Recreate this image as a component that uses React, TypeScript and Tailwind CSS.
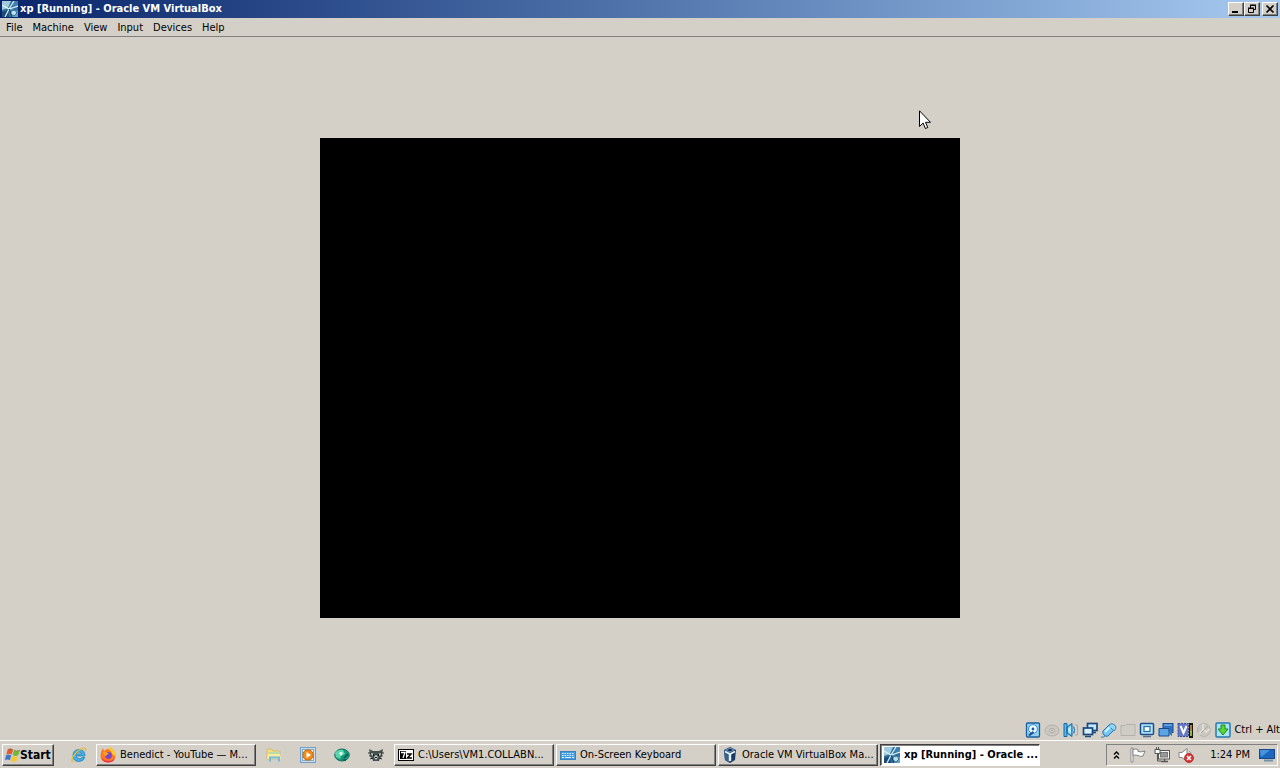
import type { ReactNode } from 'react';

type IconProps = { className?: string };

function Svg({ children, className = '', box = '0 0 16 16' }: { children: ReactNode; className?: string; box?: string }) {
  return (
    <svg viewBox={box} className={`size-4 shrink-0 ${className}`} aria-hidden="true">
      {children}
    </svg>
  );
}

const GuestIcon = ({ className }: IconProps) => (
  <Svg className={className}>
    <rect width="16" height="16" fill="#2f6f9c" />
    <path d="M0 0h9L6 7 0 9z" fill="#9fcbdd" />
    <path d="M10 0h6v6l-6-1z" fill="#3d7fae" />
    <path d="M0 11l6-2 1 7H0z" fill="#1d4b78" />
    <path d="M9 8l7 2v6h-6z" fill="#5ea3c6" />
    <path d="M0 4l7 4 9-3M12 0L7 8l-4 8" fill="none" stroke="#d8f0f8" strokeWidth="1.2" />
    <path d="M7 8l3 8" stroke="#163f66" />
    <path d="M9 10l4-1 2 3-3 3-3-2z" fill="#b4dfee" stroke="#194468" strokeWidth=".7" />
  </Svg>
);

const DiskIcon = () => (
  <Svg>
    <rect x="1.5" y="1" width="13" height="14" rx="1" fill="#8fd0f4" stroke="#1d5d9e" strokeWidth="1.3" />
    <circle cx="8" cy="7" r="4.4" fill="#eefaff" stroke="#3b8cc8" />
    <circle cx="8" cy="7" r="1.4" fill="#1d5d9e" />
    <path d="M3 13l5-4 1 2-4 3z" fill="#1d4f8c" />
  </Svg>
);
const DiscIcon = () => (
  <Svg>
    <ellipse cx="8" cy="8.500" rx="7" ry="5.500" fill="#cbc8c1" stroke="#b2afa8" />
    <ellipse cx="8" cy="8.500" rx="2.600" ry="2" fill="#dedbd4" stroke="#aaa79f" />
    <circle cx="8" cy="8.500" r=".8" fill="#99968f" />
  </Svg>
);
const AudioIcon = () => (
  <Svg>
    <path d="M1 1.500h3v13H1zM4 5l5-3.500v13L4 11z" fill="#55b8ee" stroke="#1967a5" />
    <path d="M5 6l3-2v8l-3-2z" fill="#b5ecff" />
    <path d="M10.500 4.500q2 3.500 0 7" fill="none" stroke="#338ac4" strokeWidth="1.300" />
    <path d="M12 3h2.500v10H12" fill="none" stroke="#aaa9a4" />
  </Svg>
);
const NetworkIcon = () => (
  <Svg>
    <rect x="5.500" y="1.500" width="9.500" height="7" fill="#c3e8fa" stroke="#1b477d" strokeWidth="1.700" />
    <rect x="1.500" y="6" width="9" height="6.500" fill="#d5effb" stroke="#1b477d" strokeWidth="1.700" />
    <path d="M3 14.500h6M11 10.500h3" stroke="#1b477d" strokeWidth="1.300" />
  </Svg>
);
const UsbIcon = () => (
  <Svg>
    <path d="M2 9l6-6q2-1 4 1t1 4l-6 6q-2 1-4-1T2 9z" fill="#74c7f3" stroke="#2773b1" />
    <path d="M8 3q2-2 4-1 3 1 3 4l-2 3-5-5z" fill="#8fd6f7" stroke="#3f83b8" />
    <path d="M4 10l5-5" stroke="#d0f4ff" strokeWidth="2" />
    <path d="M4 14q-2 2-4 1" fill="none" stroke="#327fb5" />
  </Svg>
);
const FolderIcon = () => (
  <Svg>
    <path d="M1 3.500h4l1-1h9v11H1z" fill="#cfccc5" stroke="#b3b0a9" />
  </Svg>
);
const DisplayIcon = () => (
  <Svg>
    <rect x="1.500" y="1.500" width="13" height="11" rx="1" fill="#b9e4f7" stroke="#184e8c" strokeWidth="1.500" />
    <rect x="5" y="4.500" width="6" height="5" fill="#fff" stroke="#2373ad" strokeWidth="1.300" />
    <path d="M4 14.500h8" stroke="#5d6f8f" strokeWidth="1.500" />
  </Svg>
);
const RecordIcon = () => (
  <Svg>
    <rect x="5" y="1.500" width="10" height="9" fill="#2f72c7" stroke="#194887" />
    <path d="M6 3h8" stroke="#8dc9f0" />
    <path d="M1 6.500h10V14H1z" fill="#5ba5e7" stroke="#194887" />
    <path d="M11 10l3-2v6l-3-2z" fill="#3976be" />
  </Svg>
);
const CpuIcon = () => (
  <Svg>
    <rect x="1" y="1.500" width="10.500" height="13" fill="#6779c5" stroke="#374a96" strokeDasharray="2 1" />
    <path d="M3.500 4l3 7 3-7" fill="none" stroke="#fff" strokeWidth="2" />
    <rect x="12" y="1" width="4" height="15" fill="#17170a" />
    <path d="M13.200 3h1.600v7h-1.600z" fill="#d9953b" />
    <path d="M13.200 9h1.600v5h-1.600z" fill="#b9dc42" />
  </Svg>
);
const MouseIcon = () => (
  <Svg>
    <circle cx="8" cy="8" r="6.500" fill="#cac7c0" stroke="#b7b4ad" />
    <path d="M7 2v5l3 3 4-3M7 8l-4 4" fill="none" stroke="#e5e3de" strokeWidth="1.500" />
    <path d="M5 11l7-7" stroke="#aaa79f" />
  </Svg>
);
const HostKeyIcon = () => (
  <Svg>
    <rect x="1" y="1" width="14" height="14" rx="1" fill="#a9e3f5" stroke="#2678ae" strokeWidth="1.500" />
    <path d="M6 3h4v4h3l-5 6-5-6h3z" fill="#54d832" stroke="#258624" />
  </Svg>
);

const WindowsFlag = () => (
  <Svg className="-mr-px" box="0 0 18 16">
    <path d="M3 2q3-2 6 0L7.500 7.500q-3-2-6 0z" fill="#e6552c" />
    <path d="M10 2.500q3 2 7 0L15 8q-3 2-6.500 0z" fill="#72b83c" />
    <path d="M1 8.500q3-2 6 0L5.500 14q-3-2-5.500 0z" fill="#3c77cc" />
    <path d="M8 9q3.500 2 6.500 0L13 14.500q-3 2-6.500 0z" fill="#f5c62d" />
    <path d="M3 2q3-2 6 0M10 2.500q3 2 7 0" fill="none" stroke="#746844" strokeWidth=".6" />
  </Svg>
);
const ExplorerIcon = () => (
  <Svg>
    <path d="M14 9H5.300q.3 2.800 3 2.800 2 0 2.700-1.300h2.800Q12.300 14.500 8 14.500 2 14.500 2 8.500T8 2.500q6 0 6 6.500zM5.300 7h5.400Q10.500 5 8 5T5.300 7z" fill="#42b2e8" stroke="#1777b3" strokeWidth=".7" />
    <path d="M2.500 14.500Q-1 14.500 2.500 9M2 10Q7 2 13 1.200q3-.2 1.200 3" fill="none" stroke="#e8bb32" strokeWidth="1.300" />
  </Svg>
);
const FirefoxIcon = () => (
  <Svg>
    <path d="M8 2q3-2 2-2 5 3 5.500 8 0 7.500-7.500 7.500T.5 8.500Q.5 4 3 1l1 3q2-2 4-2z" fill="#ff7a1c" />
    <path d="M10 0q5 3 5.500 8-1 2-3-1-1-3-4-5z" fill="#ffcf32" />
    <path d="M1 6q0 8 7 8t7-5q0 6.500-7 6.500T1 6z" fill="#e82b57" />
    <circle cx="8.500" cy="8.500" r="3.400" fill="#7b45c6" />
    <path d="M3 5q3-1 6 2-2 0-3 2-3-1-3-4z" fill="#ff9e24" />
  </Svg>
);
const FilesIcon = () => (
  <Svg>
    <path d="M1 2h5l1 2h7v8H1z" fill="#f3dc7b" stroke="#c8b55e" strokeWidth=".7" />
    <path d="M3 5h10v4H3z" fill="#b8dcb0" />
    <path d="M2 7h12l1 5H1z" fill="#f9ed9b" />
    <path d="M4 14.500v-4h9v4" fill="none" stroke="#73b8e1" strokeWidth="2" />
  </Svg>
);
const PlayerIcon = () => (
  <Svg>
    <rect x=".5" y=".5" width="15" height="15" fill="#c8ddec" stroke="#6f9fca" />
    <rect x="2.500" y="2.500" width="11" height="11" fill="#e8eff2" stroke="#86a9c4" />
    <circle cx="8" cy="8" r="5.200" fill="#f28c16" stroke="#c66c17" />
    <path d="M6.500 5v6l4.500-3z" fill="#fff" />
  </Svg>
);
const GlobeIcon = () => (
  <Svg>
    <ellipse cx="8" cy="8" rx="7.300" ry="6" fill="#179779" stroke="#0e725f" />
    <path d="M1 6q3-4 8-3l2 4-4 2-1 3-4-2z" fill="#5bd6ac" />
    <path d="M5 6q2-2 4 0L7 9z" fill="#e1fff3" />
    <path d="M10 11l4-4M9 13h3" stroke="#075a4f" strokeWidth="1.500" />
  </Svg>
);
const CatIcon = () => (
  <Svg>
    <path d="M1 2l4 2h6l4-2-1 6 1 1-3 2-1 3H5l-1-3-3-2 1-2z" fill="#46504e" />
    <path d="M3 6l3 1-2 2zM13 6l-3 1 2 2zM6 10l2-2 2 2-2 3z" fill="#d4dbd3" />
    <path d="M5 7h1v2H5zM10 7h1v2h-1zM7 10h2v1H7z" fill="#101716" />
    <path d="M0 6h3M13 6h3M2 12l3-1M11 11l3 1" stroke="#252e2d" />
  </Svg>
);
const SevenZipIcon = () => (
  <Svg>
    <rect x=".5" y="2.500" width="15" height="11" fill="#fff" stroke="#000" />
    <rect x="2" y="4" width="6" height="8" fill="#000" />
    <path d="M3 5.500h4L5 11" fill="none" stroke="#fff" strokeWidth="1.300" />
    <path d="M9 7h4l-3.500 4H14" fill="none" stroke="#000" strokeWidth="1.500" />
  </Svg>
);
const KeyboardIcon = () => (
  <Svg>
    <rect x=".5" y="4.500" width="15" height="8" fill="#449de0" stroke="#3e83bf" />
    <path d="M2 6.500h12M2 8.500h12" stroke="#d9f2ff" strokeDasharray="1.500 1" />
    <path d="M2 10.500h2M5 10.500h6M12 10.500h2" stroke="#d9f2ff" />
  </Svg>
);
const VirtualBoxIcon = () => (
  <Svg>
    <path d="M8 0l6 3-1 10-5 3-5-3L2 3z" fill="#1b3a63" />
    <path d="M2 3l6 3v10l-5-3z" fill="#34618f" />
    <path d="M3 3l5-2.500L13 3 8 5.500z" fill="#6f97bd" />
    <path d="M3 4.500l5 2.500 5-2.500" fill="none" stroke="#e7f2fb" strokeWidth="1.600" />
    <path d="M8 7v7" stroke="#e7f2fb" strokeWidth="2.400" />
    <path d="M5 3l3 1.500L11 3 8 1.800z" fill="#112b50" />
  </Svg>
);
const ChevronsIcon = () => (
  <svg viewBox="0 0 7 8" className="h-2 w-[7px] shrink-0" aria-hidden="true">
    <path d="M1 3.500L3.500 1 6 3.500M1 7.500L3.500 5 6 7.500" fill="none" stroke="#000" strokeWidth="1.300" />
  </svg>
);
const FlagIcon = () => (
  <Svg>
    <path d="M1 1h2v14H1z" fill="#fff" stroke="#777" strokeWidth=".8" />
    <path d="M3 2.500q3-1 5 0v2q3 1 7-.5l-2 5q-3 1-5-.500-3-1-5 0z" fill="#fff" stroke="#777" strokeWidth=".9" />
  </Svg>
);
const TrayNetworkIcon = () => (
  <Svg>
    <rect x="4.500" y="3.500" width="11" height="8.500" fill="#f2f2f0" stroke="#555" />
    <rect x="6.500" y="5.500" width="7" height="4.500" fill="#999" stroke="#777" />
    <path d="M7 14.500h7M10.500 12v2" stroke="#555" strokeWidth="1.300" />
    <path d="M1 2.500h5v4H1z" fill="#fff" stroke="#555" />
    <path d="M3.500 6.500v7.500H7M2.500 0v3M4.500 0v3" fill="none" stroke="#555" />
  </Svg>
);
const MutedIcon = () => (
  <Svg>
    <path d="M1 5.500h3l5-4v13l-5-4H1z" fill="#fff" stroke="#888" />
    <path d="M11 4q2 1 2 3" fill="none" stroke="#999" />
    <circle cx="11" cy="11" r="4.500" fill="#d93434" stroke="#9e2020" strokeWidth=".7" />
    <path d="M9 9l4 4M13 9l-4 4" stroke="#fff" strokeWidth="1.500" />
  </Svg>
);
const DesktopIcon = () => (
  <Svg>
    <rect x=".5" y="2.500" width="15" height="9" fill="#1c67be" stroke="#17498f" />
    <path d="M1 3h10L2 10z" fill="#4a94df" />
    <path d="M5 13.500h9" stroke="#7391a8" strokeWidth="2" />
  </Svg>
);

const raised =
  'border border-t-white border-l-white border-r-[#404040] border-b-[#404040] bg-[#d4d0c8] shadow-[inset_-1px_-1px_0_#808080]';

function TitleButton({ label, children, className = '' }: { label: string; children: ReactNode; className?: string }) {
  return (
    <button type="button" aria-label={label} className={`flex h-3.5 w-4 items-center justify-center ${raised} ${className}`}>
      <svg viewBox="0 0 10 10" className="size-2.5" fill="none" stroke="#000" aria-hidden="true">
        {children}
      </svg>
    </button>
  );
}

function TaskButton({ icon, children }: { icon: ReactNode; children: ReactNode }) {
  return (
    <button type="button" className={`flex h-[22px] w-40 items-center gap-1 pl-[3px] whitespace-nowrap ${raised}`}>
      {icon}
      <span>{children}</span>
    </button>
  );
}

function QuickButton({ label, children }: { label: string; children: ReactNode }) {
  return (
    <button type="button" aria-label={label} className="flex h-[22px] w-[34px] shrink-0 items-center justify-center">
      {children}
    </button>
  );
}

const menus = ['File', 'Machine', 'View', 'Input', 'Devices', 'Help'];

export default function App() {
  return (
    <div className="relative flex min-h-screen flex-col bg-[#d4d0c8] font-['Tahoma','DejaVu_Sans_Condensed','DejaVu_Sans',sans-serif] text-[11px] leading-4 text-black">
      <header className="flex h-[18px] items-center bg-linear-to-r from-[#0a246a] to-[#a6caf0] pr-0.5 pl-0.5">
        <GuestIcon />
        <h1 className="ml-0.5 flex-1 truncate font-bold text-white">xp [Running] - Oracle VM VirtualBox</h1>
        <TitleButton label="Minimize">
          <path d="M1 8h6" strokeWidth="2" />
        </TitleButton>
        <TitleButton label="Restore">
          <path d="M3.500 4V1.500h5v4H7M1.500 4.500h5v4h-5zM3 1h6M1 4h6" />
        </TitleButton>
        <TitleButton label="Close" className="ml-0.5">
          <path d="M1.500 1.500l7 7M8.500 1.500l-7 7" strokeWidth="1.600" />
        </TitleButton>
      </header>

      <nav className="flex h-[19px] items-end border-b border-[#808080] pl-px">
        {menus.map((menu) => (
          <button key={menu} type="button" className="px-[5px]">
            {menu}
          </button>
        ))}
      </nav>

      <main className="flex flex-1 items-center justify-center pb-0.5">
        <div className="aspect-4/3 w-1/2 bg-black" role="img" aria-label="Guest display" />
      </main>

      <footer className="flex h-5 items-center justify-end gap-[3px]">
        <DiskIcon />
        <DiscIcon />
        <AudioIcon />
        <NetworkIcon />
        <UsbIcon />
        <FolderIcon />
        <DisplayIcon />
        <RecordIcon />
        <CpuIcon />
        <MouseIcon />
        <HostKeyIcon />
        <span className="whitespace-nowrap">Ctrl + Alt</span>
      </footer>

      <div className="flex h-7 items-center border-t border-white bg-[#d4d0c8] px-0.5 pt-0.5 pb-px">
        <button type="button" className={`flex h-[22px] w-[52px] shrink-0 items-center px-0.5 text-xs font-bold ${raised}`}>
          <WindowsFlag />
          <span>Start</span>
        </button>
        <div className="ml-2 flex min-w-0 flex-1 items-center">
          <QuickButton label="Internet Explorer">
            <ExplorerIcon />
          </QuickButton>
          <TaskButton icon={<FirefoxIcon />}>Benedict - YouTube — M...</TaskButton>
          <div className="flex px-px">
            <QuickButton label="Windows Explorer">
              <FilesIcon />
            </QuickButton>
            <QuickButton label="Media Player">
              <PlayerIcon />
            </QuickButton>
            <QuickButton label="Globe">
              <GlobeIcon />
            </QuickButton>
            <QuickButton label="Cat">
              <CatIcon />
            </QuickButton>
          </div>
          <div className="flex min-w-0 gap-0.5">
            <TaskButton icon={<SevenZipIcon />}>C:\Users\VM1.COLLABN...</TaskButton>
            <TaskButton icon={<KeyboardIcon />}>On-Screen Keyboard</TaskButton>
            <TaskButton icon={<VirtualBoxIcon />}>Oracle VM VirtualBox Ma...</TaskButton>
            <button
              type="button"
              aria-pressed="true"
              className="flex h-[22px] w-40 items-center gap-1 border border-t-[#404040] border-r-white border-b-white border-l-[#404040] bg-white pl-[3px] font-bold whitespace-nowrap shadow-[inset_1px_1px_0_#808080]"
            >
              <GuestIcon />
              <span>xp [Running] - Oracle ...</span>
            </button>
          </div>
        </div>
        <div className="flex h-[22px] shrink-0 items-center gap-2 border border-t-[#808080] border-r-white border-b-white border-l-[#808080] pr-0.5 pl-1.5">
          <button type="button" aria-label="Show hidden icons" className="mr-0.5">
            <ChevronsIcon />
          </button>
          <FlagIcon />
          <TrayNetworkIcon />
          <MutedIcon />
          <time className="mr-px ml-2">1:24 PM</time>
          <DesktopIcon />
        </div>
      </div>

      <svg viewBox="0 0 12 20" className="pointer-events-none absolute top-[110px] left-[919px] h-5 w-3" aria-hidden="true">
        <path d="M.5 .8v15.700l3.600-3.500 2.300 5.500 2.400-1-2.300-5.200h5z" fill="#fff" stroke="#000" />
      </svg>
    </div>
  );
}
